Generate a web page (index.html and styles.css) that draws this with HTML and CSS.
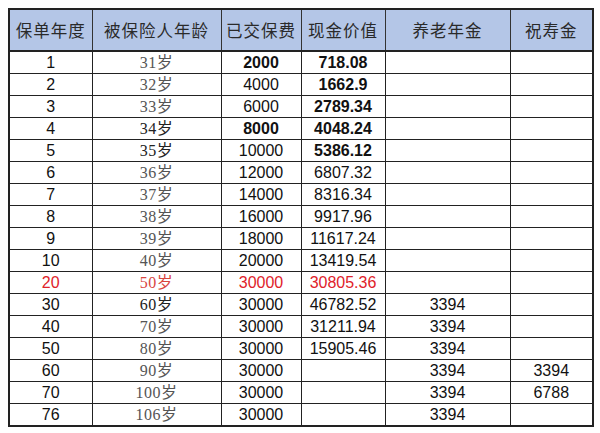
FILE: index.html
```html
<!DOCTYPE html>
<html lang="zh-CN">
<head>
<meta charset="utf-8">
<title>保单利益表</title>
<link rel="stylesheet" href="styles.css">
</head>
<body>
<table class="plan">
  <colgroup>
    <col class="c1"><col class="c2"><col class="c3"><col class="c4"><col class="c5"><col class="c6">
  </colgroup>
  <thead>
    <tr>
      <th>保单年度</th><th>被保险人年龄</th><th>已交保费</th><th>现金价值</th><th>养老年金</th><th>祝寿金</th>
    </tr>
  </thead>
  <tbody>
    <tr><td>1</td><td class="age">31岁</td><td class="b">2000</td><td class="b">718.08</td><td></td><td></td></tr>
    <tr><td>2</td><td class="age">32岁</td><td>4000</td><td class="b">1662.9</td><td></td><td></td></tr>
    <tr><td>3</td><td class="age">33岁</td><td>6000</td><td class="b">2789.34</td><td></td><td></td></tr>
    <tr><td>4</td><td class="age dark">34岁</td><td class="b">8000</td><td class="b">4048.24</td><td></td><td></td></tr>
    <tr><td>5</td><td class="age dark">35岁</td><td>10000</td><td class="b">5386.12</td><td></td><td></td></tr>
    <tr><td>6</td><td class="age">36岁</td><td>12000</td><td>6807.32</td><td></td><td></td></tr>
    <tr><td>7</td><td class="age">37岁</td><td>14000</td><td>8316.34</td><td></td><td></td></tr>
    <tr><td>8</td><td class="age">38岁</td><td>16000</td><td>9917.96</td><td></td><td></td></tr>
    <tr><td>9</td><td class="age">39岁</td><td>18000</td><td>11617.24</td><td></td><td></td></tr>
    <tr><td>10</td><td class="age">40岁</td><td>20000</td><td>13419.54</td><td></td><td></td></tr>
    <tr class="red"><td>20</td><td class="age">50岁</td><td>30000</td><td>30805.36</td><td></td><td></td></tr>
    <tr><td>30</td><td class="age dark">60岁</td><td>30000</td><td>46782.52</td><td>3394</td><td></td></tr>
    <tr><td>40</td><td class="age">70岁</td><td>30000</td><td>31211.94</td><td>3394</td><td></td></tr>
    <tr><td>50</td><td class="age">80岁</td><td>30000</td><td>15905.46</td><td>3394</td><td></td></tr>
    <tr><td>60</td><td class="age">90岁</td><td>30000</td><td></td><td>3394</td><td>3394</td></tr>
    <tr><td>70</td><td class="age">100岁</td><td>30000</td><td></td><td>3394</td><td>6788</td></tr>
    <tr><td>76</td><td class="age">106岁</td><td>30000</td><td></td><td>3394</td><td></td></tr>
  </tbody>
</table>
</body>
</html>
```
FILE: styles.css
```css
html, body {
  margin: 0;
  padding: 0;
  background: #ffffff;
}
body {
  padding: 8px 0 0 8px;
}
.plan {
  border-collapse: collapse;
  table-layout: fixed;
  width: 584px;
  font-family: "Liberation Sans", Arial, "Noto Sans CJK SC", sans-serif;
  font-size: 16px;
  color: #111;
  border: 2px solid #222;
}
.c1 { width: 83px; }
.c2 { width: 129px; }
.c3 { width: 80px; }
.c4 { width: 84px; }
.c5 { width: 125px; }
.c6 { width: 83px; }
.plan th {
  background: #b4c6e7;
  height: 40px;
  padding: 0;
  font-family: "Noto Sans CJK SC", sans-serif;
  font-weight: 400;
  font-size: 16.5px;
  letter-spacing: 1px;
  color: #2a2a2a;
  border: 1px solid #333;
  border-bottom: 2px solid #222;
  text-align: center;
  vertical-align: middle;
}
.plan td {
  height: 21px;
  padding: 0;
  line-height: 20px;
  border: 1px solid #222;
  text-align: center;
  vertical-align: middle;
}
.plan td.b {
  font-weight: 700;
}
.plan td.age {
  font-family: "Liberation Serif", "Times New Roman", "Noto Sans CJK SC", serif;
  color: #555;
  font-size: 16px;
  letter-spacing: 0.5px;
}
.plan td.age.dark {
  color: #222;
}
.plan tr.red td {
  color: #e0222a;
}
.plan tr.red td.age {
  color: #d9463f;
}
```
